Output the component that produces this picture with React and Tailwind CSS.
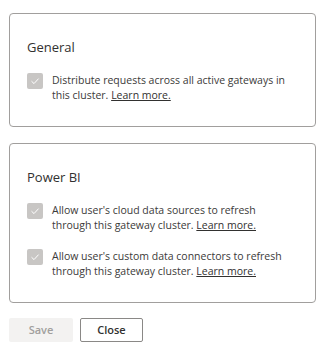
const Check = () => (
  <span className="flex h-4 w-4 shrink-0 items-center justify-center rounded-[2px] bg-[#c8c6c4]">
    <svg width="10" height="10" viewBox="0 0 10 10" fill="none">
      <path d="M1.5 5.2 L4 7.6 L8.6 2.6" stroke="#ffffff" strokeWidth="1" />
    </svg>
  </span>
);

function Option({ first, second }) {
  return (
    <div className="flex items-start gap-[9px]">
      <Check />
      <p className="text-[10.5px] leading-[15px] text-[#3b3a39]">
        {first}
        <br />
        {second}{" "}
        <a href="#" className="text-[#323130] underline">
          Learn more.
        </a>
      </p>
    </div>
  );
}

function Card({ title, children }) {
  return (
    <div className="rounded-[4px] border border-[#a19f9d] px-[17px] pt-[25px] pb-[23px]">
      <h2 className="mb-[17px] text-[13px] leading-[17px] text-[#323130]">{title}</h2>
      <div className="flex flex-col gap-[16px]">{children}</div>
    </div>
  );
}

export default function App() {
  return (
    <div
      className="h-[345px] w-[325px] bg-white px-[9px] pt-[13px]"
      style={{ fontFamily: '"Open Sans", "Noto Sans", sans-serif' }}
    >
      <Card title="General">
        <Option first="Distribute requests across all active gateways in" second="this cluster." />
      </Card>
      <div className="h-[16px]" />
      <Card title="Power BI">
        <Option first="Allow user's cloud data sources to refresh" second="through this gateway cluster." />
        <Option first="Allow user's custom data connectors to refresh" second="through this gateway cluster." />
      </Card>
      <div className="mt-[15px] flex gap-[7px]">
        <button className="h-[24px] w-[64px] rounded-[2px] bg-[#f3f2f1] text-[11px] font-semibold text-[#a19f9d]">
          Save
        </button>
        <button className="h-[24px] w-[63px] rounded-[2px] border border-[#8a8886] text-[11px] font-semibold text-[#323130]">
          Close
        </button>
      </div>
    </div>
  );
}
